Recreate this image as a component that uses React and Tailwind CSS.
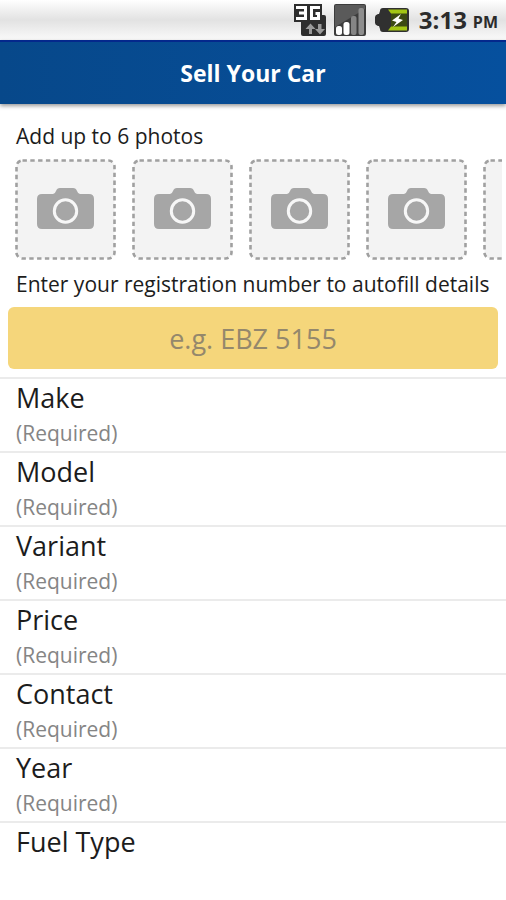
const PHOTO_SLOTS = 6;

const FIELDS = ['Make', 'Model', 'Variant', 'Price', 'Contact', 'Year'];

export default function App() {
  return (
    <div className="h-screen overflow-hidden bg-white font-['Open_Sans','Noto_Sans',sans-serif] text-[#1c1c1c]">
      <StatusBar />
      <header className="relative flex h-16 items-center justify-center border-t-2 border-[#04288c] bg-linear-to-r from-[#07488a] to-[#06509e] shadow-[0_2px_4px_rgba(0,0,0,0.4)]">
        <h1 className="text-[23px] font-bold text-white">Sell Your Car</h1>
      </header>
      <main>
        <PhotoPicker />
        <Registration />
        <FieldList />
      </main>
    </div>
  );
}

function StatusBar() {
  return (
    <div className="flex h-10 items-center justify-end bg-linear-to-b from-white via-[#e2e2e2] to-[#fafafa] pr-2">
      <NetworkIcon />
      <SignalIcon />
      <BatteryIcon />
      <span className="ml-2.5 text-2xl font-bold text-[#2b2b2b]">3:13</span>
      <span className="ml-1.5 pt-1 text-base font-bold text-[#2b2b2b]">PM</span>
    </div>
  );
}

function PhotoPicker() {
  return (
    <section>
      <h2 className="px-4 pt-4 text-[21px] leading-[32px]">Add up to 6 photos</h2>
      <div className="mt-[7px] mr-1 ml-[15px] flex gap-4 overflow-hidden">
        {Array.from({ length: PHOTO_SLOTS }, (_, i) => (
          <button
            key={i}
            type="button"
            aria-label={`Add photo ${i + 1}`}
            className="size-[101px] shrink-0"
          >
            <PhotoPlaceholder />
          </button>
        ))}
      </div>
    </section>
  );
}

function Registration() {
  return (
    <section className="pt-2">
      <label
        htmlFor="registration"
        className="block pr-2 pl-4 text-[21px] leading-[32px]"
      >
        Enter your registration number to autofill details
      </label>
      <div className="mt-[7px] px-2">
        <input
          id="registration"
          type="text"
          placeholder="e.g. EBZ 5155"
          className="h-[62px] w-full rounded-md bg-[#f5d67b] text-center text-[27px] placeholder:text-[#94886c]"
        />
      </div>
    </section>
  );
}

function FieldList() {
  return (
    <ul className="mt-2">
      {FIELDS.map((name) => (
        <li key={name} className="border-t-2 border-[#ebebeb]">
          <button type="button" className="block w-full px-4 pb-0.5 text-left">
            <span className="block text-[27px] leading-[38px]">{name}</span>
            <span className="block text-[21px] leading-[32px] text-[#858585]">
              (Required)
            </span>
          </button>
        </li>
      ))}
      <li className="border-t-2 border-[#ebebeb]">
        <button type="button" className="block w-full px-4 text-left">
          <span className="block text-[27px] leading-[38px]">Fuel Type</span>
        </button>
      </li>
    </ul>
  );
}

/* Icons */

function PhotoPlaceholder() {
  return (
    <svg viewBox="0 0 101 101" className="size-full" aria-hidden="true">
      <rect
        x="1.5"
        y="1.5"
        width="98"
        height="98"
        rx="6"
        fill="#f3f3f3"
        stroke="#a0a0a0"
        strokeWidth="2.6"
        strokeDasharray="4.4 3.4"
      />
      <path
        d="M27 35h11q2 0 3-3q1-3 4-3h13q3 0 4 3q1 3 3 3H74q5 0 5 5v25q0 5-5 5H27q-5 0-5-5V40q0-5 5-5z"
        fill="#a6a6a6"
      />
      <circle cx="50.500" cy="52" r="11.200" fill="none" stroke="#f7f7f7" strokeWidth="3" />
    </svg>
  );
}

function NetworkIcon() {
  return (
    <svg width="34" height="34" viewBox="0 0 34 34" aria-hidden="true">
      <rect x="8" y="12" width="25" height="21" rx="2" fill="#2e2e2e" />
      <path d="M1 1h28v18H1z" fill="#2e2e2e" />
      {/* 3 */}
      <path d="M3 4.500h9.500v11H3M6 10h7" fill="none" stroke="#fff" strokeWidth="3" />
      {/* G */}
      <path d="M27 4.500h-8.500v11h7V10.500h-3" fill="none" stroke="#fff" strokeWidth="3" />
      <path
        d="M16 31v-5h-3.500l5-5.500 5 5.500H19v5zM25 21v5h-3l5 5.500 5-5.500h-3.500v-5z"
        fill="#9a9a9a"
      />
    </svg>
  );
}

function SignalIcon() {
  return (
    <svg width="34" height="34" viewBox="0 0 34 34" className="ml-1.5" aria-hidden="true">
      <rect x="1" y="1" width="32" height="32" rx="2" fill="#3c3c3c" />
      <path d="M2 3q0-1 1-1h28q1 0 1 1v3L2 24z" fill="#5a5a5a" />
      <rect x="3" y="23" width="6" height="9" rx="2.500" fill="#fff" />
      <rect x="10.500" y="19" width="6" height="13" rx="2.500" fill="#fff" />
      <rect x="18" y="13" width="5.500" height="19" rx="2" fill="#858585" />
      <rect x="25.500" y="5" width="5.500" height="27" rx="2" fill="#8e8e8e" />
    </svg>
  );
}

function BatteryIcon() {
  return (
    <svg width="34" height="26" viewBox="0 0 34 26" className="ml-2" aria-hidden="true">
      <path
        d="M8 1h23q3 0 3 3v18q0 3-3 3H8q-3 0-3-3l-1-3H3q-3-1-3-3v-6q0-2 3-3h1l1-3q0-3 3-3z"
        fill="#303030"
      />
      <path d="M16 3h16v20H16z" fill="#3c4a12" />
      <path d="M13 2.500h19v4H16zM16 19.500h16v4H13z" fill="#a3c614" />
      <path d="M26 7l-9 6.500 4.500 1.500L18 20l10-7-4.500-1.500z" fill="#fff" />
    </svg>
  );
}
